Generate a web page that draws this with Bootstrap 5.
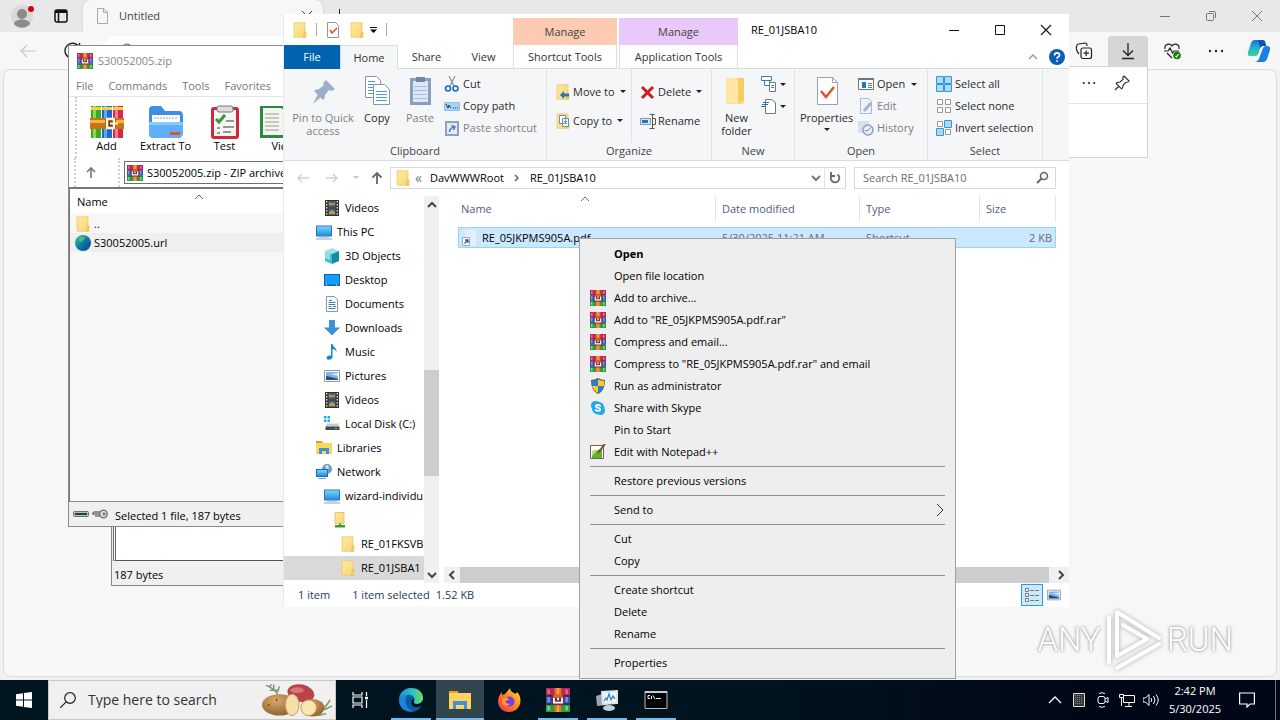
<!DOCTYPE html>
<html lang="en">
<head>
<meta charset="utf-8">
<meta name="viewport" content="width=device-width, initial-scale=1">
<title>Desktop</title>
<link rel="stylesheet" href="https://cdn.jsdelivr.net/npm/bootstrap@5.3.0/dist/css/bootstrap.min.css">
<style>
  body { font-family: "Open Sans", "Noto Sans", sans-serif; font-size: 11px; line-height: 16px; color: #1a1a1a; }
  svg { display: block; flex: none; }
  button.plain { border: 0; background: none; padding: 0; color: inherit; font-size: inherit; line-height: inherit; }
  a.plain { color: inherit; text-decoration: none; }
  .plain:disabled { color: #7d7f85 !important; }
  .i16 { width: 16px; height: 16px; }
  .i24 { width: 24px; height: 24px; }
  .i34 { width: 34px; height: 34px; }
  .desktop { height: 100vh; min-height: 700px; overflow: hidden; }
  .win { position: absolute; overflow: hidden; white-space: nowrap; }

  /* browser */
  .browser { background: #f1f1f3; }
  .tabstrip { height: 32px; background: #e8e8e8; }
  .tab-lead { width: 83px; }
  .tab-active { height: 32px; width: 240px; background: #f7f7f7; border-radius: 8px 8px 0 0; padding: 0 8px 0 12px; color: #444; box-shadow: 0 0 2px #bbb; }
  .edgebar { height: 37px; background: #f7f7f7; }
  .omnibox { height: 30px; border-radius: 15px 0 0 15px; background: #fff; margin-left: 20px; padding-left: 18px; }
  .tool { width: 44px; height: 30px; display: flex; align-items: center; justify-content: center; }
  .tool.on { width: 40px; margin: 0 2px; background: #d6d6d6; border-radius: 4px 4px 0 0; }
  .tool:last-child { width: 42px; }
  .pagearea { margin: 0 3px 3px; background: #f7f7f7; border: 1px solid #dcdce0; border-radius: 8px; }
  .flyout { right: 132px; top: 66px; width: 380px; height: 92px; background: #fff; border: 1px solid #d4d4d4; }
  .flyout-head { height: 37px; border-bottom: 1px solid #e2e2e2; gap: 18px; padding: 0 17px 4px 0; }
  .cap { width: 46px; height: 31px; display: flex; align-items: center; justify-content: center; }

  /* archive windows */
  .backwin { left: 111px; top: 300px; width: 400px; height: 286px; background: #f0f0f0; border: 1px solid #8a8a8a; }
  .backlist { margin: 0 0 0 1px; background: #fff; border-left: 3px double #666; border-bottom: 1px solid #555; }
  .backstatus { padding: 6px 0 2px 2px; color: #000; }
  .rar { left: 68px; top: 45px; width: 420px; height: 482px; background: #fff; border: 1px solid #8a8a8a; }
  .rar-title { height: 30px; padding-left: 8px; color: #888; gap: 5px; }
  .rar-menu { height: 20px; padding-left: 7px; gap: 15px; color: #777; }
  .rar-tools { height: 62px; border-top: 1px solid #e4e4e4; padding-left: 6px; color: #000; }
  .rar-tools .plain, .rar-path .plain { line-height: 13px; }
  .grip { border-left: 2px dotted #cfcfcf; align-self: stretch; }
  .rar-btn { width: 59px; }
  .rar-path { height: 29px; padding-left: 5px; }
  .rar-up { width: 42px; padding-left: 7px !important; }
  .rar-box { border: 1px solid #707070; height: 23px; padding-left: 2px; gap: 4px; color: #000; }
  .rar-list { border-top: 2px solid #777; border-left: 1px solid #777; border-bottom: 1px solid #8a8a8a; background: #f7f7f7; color: #000; }
  .rar-col { height: 25px; background: #fff; padding: 5px 0 0 7px; gap: 86px; }
  .rar-row { height: 19px; padding-left: 5px; gap: 3px; }
  .rar-row.picked { background: #efefef; }
  .rar-status { height: 24px; background: #f0f0f0; padding-left: 4px; color: #000; gap: 3px; }
  .rar-status span { padding: 3px 0 0 4px; }

  /* explorer */
  .explorer { left: 283px; right: 211px; top: 14px; bottom: 113px; background: #fff; border-left: 1px solid #e9e9e9; }
  .ex-title { height: 31px; color: #000; }
  .ex-name { padding-left: 13px; }
  .quick { width: 229px; padding-left: 8px; }
  .vline { width: 1px; height: 13px; background: #aaa; }
  .ctx { padding-top: 4px; color: #444; }
  .ctx span { display: flex; height: 27px; align-items: center; justify-content: center; }
  .c1 { width: 104px; margin-right: 2px; } .c2 { width: 119px; }
  .peach { background: #fccbb1; } .lilac { background: #e8c9fa; }
  .ex-tabs { height: 24px; border-bottom: 1px solid #dadbdc; }
  .ex-tabs .tabbtn { height: 24px; color: #333; }
  .file { width: 56px; background: #0063b1 !important; color: #fff !important; }
  .home { width: 58px; background: #f5f6f7 !important; border: 1px solid #dadbdc !important; border-bottom: 0 !important; }
  .wide { width: 57px; }
  .ctxtab { border-left: 1px solid #e0dede !important; border-right: 1px solid #e0dede !important; }
  .tabgap { width: 1px; }
  .ribbon { height: 92px; background: #f5f6f7; border-bottom: 1px solid #dadbdc; color: #2b2b2b; }
  .rgroup { display: flex; flex-direction: column; flex: none; border-right: 1px solid #e2e3e4; }
  .rgroup .glabel { height: 17px; text-align: center; color: #444; }
  .g-clip { width: 263px; } .g-org { width: 165px; } .g-new { width: 83px; } .g-open { width: 133px; } .g-sel { width: 115px; }
  .w70 { width: 70px; } .w38 { width: 38px; } .w48 { width: 48px; } .w41 { width: 41px; } .w63 { width: 63px; } .w77 { width: 77px; }
  .big { display: flex; flex-direction: column; align-items: center; padding-top: 5px !important; line-height: 13px !important; text-align: center; }
  .big svg { margin-bottom: 3px; }
  .smalls { padding-top: 4px; }
  .smalls .plain { display: flex; align-items: center; height: 22px; gap: 3px; }
  .mids { padding-top: 8px; }
  .mids .plain { display: flex; align-items: center; height: 29px; gap: 2px; }
  .caret { width: 0; height: 0; border: 3px solid transparent; border-top-color: #222; border-bottom: 0; margin-left: 3px; }
  .addr-row { height: 35px; padding: 0 13px 2px 0; color: #000; }
  .navs { width: 106px; padding-left: 11px; gap: 13px; }
  .navs .caret { margin: 0; }
  .navs svg:last-child { margin-left: -3px; }
  .abox { height: 22px; border: 1px solid #d9d9d9; }
  .crumb { font-size: 14px; margin-right: 8px; }
  .reload { width: 21px; }
  .searchbox { width: 202px; margin-left: 8px; }
  .searchbox input { border: 0; outline: 0; background: none; padding: 0 0 0 8px; min-width: 0; }
  .searchbox input::placeholder { color: #6d6d6d; opacity: 1; }
  .tree { width: 140px; flex: none; color: #000; overflow: hidden; }
  .tree a { display: flex; align-items: center; height: 24px; gap: 5px; }
  .l0 { padding-left: 32px; } .l1 { padding-left: 40px; } .l2 { padding-left: 48px; } .l3 { padding-left: 56px; }
  .tree .sel { background: #d9d9d9; }
  .vbar { width: 15px; margin-right: 1px; flex: none; background: #f0f0f0; }
  .vthumb { height: 106px; background: #cdcdcd; }
  .above { flex: 158; } .below { flex: 91; }
  .pane { min-width: 0; }
  .hbar { height: 16px; background: #f0f0f0; margin-left: 4px; }
  .hthumb { background: #cdcdcd; }
  .files { margin: 0 13px 0 18px; }
  .sortmark { left: 122px; top: 0; }
  .files table { width: 100%; table-layout: fixed; border-collapse: separate; border-spacing: 0; }
  .col-date { width: 144px; } .col-type { width: 120px; } .col-size { width: 76px; }
  .files th { font-weight: 400; color: #4c607a; height: 26px; border-right: 1px solid #e5e5e5; padding: 0 0 0 6px; }
  .files th:first-child { padding-left: 3px; }
  .files td { height: 21px; background: #cce8ff; border: 1px solid #99d1ff; border-width: 1px 0; padding: 0 3px 0 6px; color: #6d6d6d; overflow: hidden; }
  .files td:first-child { border-left-width: 1px; color: #000; padding-left: 3px; }
  .files td:last-child { border-right-width: 1px; text-align: right; }
  .files .spacer td { height: 5px; border: 0; background: none; padding: 0; }
  .ex-status { height: 24px; padding-left: 14px; color: #1e395b; }
  .picked-count { margin: 0 6px 0 22px; }
  .viewbtn { width: 22px; height: 22px; display: flex; align-items: center; justify-content: center; }
  .viewbtn.on { background: #cce8ff !important; border: 1px solid #26a0da !important; }

  /* context menu */
  .popmenu { position: absolute; left: 579px; top: 238px; width: 377px; background: #eee; border: 1px solid #a0a0a0; padding: 4px 10px; color: #000; }
  .popmenu a { display: flex; align-items: center; height: 22px; gap: 8px; }
  .popmenu hr { margin: 3px 0; border: 0; height: 1px; background: #919191; opacity: 1; }
  .ico { width: 16px; height: 16px; flex: none; }

  /* watermark */
  .wm { position: absolute; right: 47px; bottom: 48px; color: #fff; font: 300 33px/40px Roboto, sans-serif; text-shadow: 0 0 3px #999, 0 0 3px #bbb; gap: 6px; }
  .wm svg { filter: drop-shadow(0 0 2px #aaa); }

  /* taskbar */
  .taskbar { height: 40px; background: linear-gradient(90deg, #00161f, #00131f 60%, #010716 85%); color: #fff; position: relative; }
  .tb { width: 48px; height: 40px; display: flex; align-items: center; justify-content: center; }
  .apps { gap: 1px; margin-left: 3px; }
  button.run { background: linear-gradient(#76b9ed, #76b9ed) bottom / 40px 2px no-repeat; }
  button.cur { background: linear-gradient(#76b9ed, #76b9ed) bottom / 48px 2px no-repeat #30454e; }
  .tsearch { width: 288px; background: #f0f0f0; border: 1px solid #c9c9c9; padding-left: 11px; gap: 12px; }
  .tsearch input { border: 0; outline: 0; background: none; padding: 0; font-size: 14px; width: 162px; }
  .tsearch input::placeholder { color: #333; opacity: 1; }
  .tray { width: 24px; height: 40px; display: flex; align-items: center; justify-content: center; }
  .clock { width: 56px; line-height: 18px !important; }
  .peek { width: 5px; }
</style>
</head>
<body>
<svg width="0" height="0" class="position-absolute">
  <defs>
    <linearGradient id="gGlobe" x1="0" y1="0" x2="1" y2="1"><stop offset="0" stop-color="#3cc8b4"/><stop offset=".5" stop-color="#0b7aa8"/><stop offset="1" stop-color="#0a3f7f"/></linearGradient>
    <linearGradient id="gFold" x1="0" y1="0" x2="1" y2="1"><stop offset="0" stop-color="#ffe9a2"/><stop offset="1" stop-color="#f9d872"/></linearGradient>
    <linearGradient id="gBlue" x1="0" y1="0" x2="0" y2="1"><stop offset="0" stop-color="#7cd0fb"/><stop offset="1" stop-color="#1e8fdf"/></linearGradient>
    <linearGradient id="gEdge" x1="0" y1="0" x2="1" y2="0"><stop offset="0" stop-color="#1790dc"/><stop offset=".55" stop-color="#2cc0c8"/><stop offset="1" stop-color="#6fdc5a"/></linearGradient>
    <linearGradient id="gFox" x1="1" y1="0" x2="0" y2="1"><stop offset="0" stop-color="#ffe14a"/><stop offset=".45" stop-color="#ff8a1e"/><stop offset="1" stop-color="#f0205a"/></linearGradient>
    <linearGradient id="gCop" x1="0" y1="0" x2="0" y2="1"><stop offset="0" stop-color="#1a6fe0"/><stop offset=".5" stop-color="#22b2d0"/><stop offset="1" stop-color="#45cf8a"/></linearGradient>
    <radialGradient id="gPot" cx=".4" cy=".3" r=".8"><stop offset="0" stop-color="#d6a96a"/><stop offset="1" stop-color="#8a5a28"/></radialGradient>
    <symbol id="rar" viewBox="0 0 16 16">
      <path fill="#c2245c" d="M0 0h16v5H0z"/><path fill="#3450b4" d="M0 5.500h16v5H0z"/><path fill="#2d9a48" d="M0 11h16v5H0z"/>
      <path fill="#e8708e" d="M1 1h1.500v3H1zM13 1h1.500v3H13z"/><path fill="#7f96e8" d="M1 6h1.500v3.500H1zM13 6h1.500v3.500H13z"/><path fill="#7bdc7f" d="M1 12h1.500v3H1zM13 12h1.500v3H13z"/>
      <path fill="#333" d="M0 4.800h16v.8H0zM0 10.400h16v.8H0z"/><path fill="#e8761e" d="M5.800 0h4.400v16H5.800z"/><path fill="#f7a548" d="M7.300 0h1.400v16H7.300z"/>
      <path fill="#6b3048" d="M3.800 4.500h8.400v7H3.800z"/><path fill="#e0601e" d="M5 4.500h6v2H5z"/><path fill="none" stroke="#fff" stroke-width="1.200" d="M5.300 6.500v3.300h5.400V6.500M8 6.500v1.700"/>
    </symbol>
    <symbol id="folder" viewBox="0 0 16 16"><path fill="url(#gFold)" stroke="#e9c869" stroke-width=".8" d="M2 .8h11v14.400H2z"/><path fill="#f7d469" stroke="#dcb548" stroke-width=".6" d="M12.500 10h1.500v5.200h-2.500z"/></symbol>
    <symbol id="film" viewBox="0 0 16 16"><path fill="#333" d="M1 0h14v16H1z"/><path fill="#48617c" d="M4.500 1h7v6.500h-7zM4.500 8.500h7V15h-7z"/><path fill="#c69c3c" d="M5 2l4 2 2-2v3H5zM5 12l3-2 3 2v2H5z"/><path stroke="#ddd" stroke-width="1.400" stroke-dasharray="1.500 1.500" d="M2.700 1v15M13.300 1v15"/></symbol>
    <symbol id="pc" viewBox="0 0 16 16"><path fill="#2b7fb8" d="M0 1.500h16v11H0z"/><path fill="url(#gBlue)" d="M1 2.500h14v9H1z"/><path fill="#8aa4b8" d="M3 12.500h10v1H3zM0 14.500h16v1H0z"/></symbol>
    <symbol id="cube" viewBox="0 0 16 16"><path fill="#9be3ec" d="M1 3l7-3 7 3-7 3z"/><path fill="#3bbfd0" d="M1 3l7 3v10l-7-3z"/><path fill="#168ba0" d="M15 3L8 6v10l7-3z"/><path fill="#e6fbfd" d="M1 3l5 2v7l-5-2z" opacity=".5"/></symbol>
    <symbol id="desk" viewBox="0 0 16 16"><path fill="#0a67b8" d="M0 2h16v12H0z"/><path fill="#179cf5" d="M1 3h14v9.500H1z"/><path fill="#fff" d="M2 12.500h1v1H2zM12 12.500h1v1h-1z"/></symbol>
    <symbol id="docu" viewBox="0 0 16 16"><path fill="#fff" stroke="#8b98a5" d="M2.500.5h8l3 3v12h-11z"/><path stroke="#3b84b8" d="M5 4.500h3M4.500 6.500h7M4.500 8.500h7M4.500 10.500h3M9 10.500h3M4.500 12.500h7"/></symbol>
    <symbol id="down" viewBox="0 0 16 16"><path fill="#3f8ed8" d="M5 0h6v7.500h5L8 15.500 0 7.500h5z"/></symbol>
    <symbol id="music" viewBox="0 0 16 16"><path fill="#1b82d2" d="M7 0h1.500c.5 3 4.500 4 4 8-.8-2-2-2.800-4-3v8c0 3-6 4-6 1 0-2 3-3 4.500-2z"/></symbol>
    <symbol id="pic" viewBox="0 0 16 16"><path fill="#fff" stroke="#8c9aa6" d="M.5 2.500h15v11H.5z"/><path fill="#7db4ea" d="M2 4h12v8H2z"/><path fill="#284f76" d="M2 8l5 1 7 2v1H2z"/><path fill="#dcebfa" d="M6 6l8-1v3z"/></symbol>
    <symbol id="disk" viewBox="0 0 16 16"><path fill="#1cb0e8" d="M0 0h2.500v2.500H0zM3.500 0H6v2.500H3.500zM0 3.500h2.500V6H0zM3.500 3.500H6V6H3.500z"/><path fill="#c9cdd1" d="M3 7.500h11l1.500 3H1.500z"/><path fill="#45494d" d="M1.500 10.500h14V14h-14z"/><path fill="#4ade60" d="M11 12h2v1h-2z"/></symbol>
    <symbol id="libs" viewBox="0 0 16 16"><path fill="#dba52c" d="M0 1h6l1 2H0z"/><path fill="#ffd55a" d="M0 3h16v11H0z"/><path fill="#3d93d6" d="M3 14V8h10v6h-3v-3H6v3z"/></symbol>
    <symbol id="net" viewBox="0 0 16 16"><circle cx="11" cy="5" r="5" fill="#6a9cc4"/><path fill="#cfe3f2" d="M9 2l3-1 1 3-2 2z"/><path fill="#176cad" d="M0 5h12v8H0z"/><path fill="url(#gBlue)" d="M1 6h10v6H1z"/><path fill="#7fa9c8" d="M2 14h8v1H2z"/></symbol>
    <symbol id="netf" viewBox="0 0 16 16"><path fill="url(#gFold)" stroke="#e3bd55" stroke-width=".8" d="M3 .5h9v11H3z"/><path fill="#3d9c42" d="M7 11.500h2V13h4v2.500H3V13h4z"/></symbol>
    <symbol id="dots" viewBox="0 0 16 16"><circle cx="2" cy="8" r="1.200"/><circle cx="8" cy="8" r="1.200"/><circle cx="14" cy="8" r="1.200"/></symbol>
    <symbol id="books" viewBox="0 0 34 34"><path fill="#3da828" d="M1 1h10v32H1z"/><path fill="#2467c8" d="M12 1h10v32H12z"/><path fill="#d8264a" d="M23 1h10v32H23z"/><path fill="#8fd850" d="M3 1h3v32H3z"/><path fill="#5aaaf2" d="M14 1h3v32h-3z"/><path fill="#f97c90" d="M25 1h3v32h-3z"/><path fill="#f2d14c" d="M1 2h10v3H1zM12 2h10v3H12zM23 2h10v3H23z"/><path fill="#c8741a" d="M0 13h34v11H0z"/><path fill="#f7b544" d="M0 15h34v3H0z"/><path fill="#7a4012" d="M15 13h11v11H15z"/><path fill="none" stroke="#fff4d4" stroke-width="2.500" d="M17 14h7v9h-7z"/><path stroke="#fff4d4" stroke-width="2" d="M20 18.500h8"/></symbol>
  </defs>
</svg>

<div class="desktop position-relative d-flex flex-column">
  <main class="browser flex-grow-1 d-flex flex-column">
    <div class="tabstrip d-flex">
      <div class="tab-lead d-flex align-items-center ps-2">
        <svg width="30" height="30" viewBox="0 0 30 30"><circle cx="14" cy="15" r="11" fill="#d9d9d9"/><circle cx="14" cy="13" r="5" fill="#8d8a88"/><path fill="#8d8a88" d="M6 23c0-6 16-6 16 0-4 5-12 5-16 0z"/><circle cx="23" cy="8" r="3" fill="#d8000c"/></svg>
        <svg class="ms-3" width="14" height="14" viewBox="0 0 14 14" fill="none" stroke="#111" stroke-width="1.500"><rect x="1" y="1" width="12" height="12" rx="2"/><path stroke-width="3" d="M1 2.500h12"/><path d="M4.500 4v9"/></svg>
      </div>
      <div class="tab-active d-flex align-items-center"><svg class="i16" viewBox="0 0 16 16" fill="none" stroke="#aaa"><path d="M2.500.5h6l4 4v11h-10zM8.500.5v4h4"/></svg><span class="ms-2">Untitled</span>
        <button class="plain ms-auto" aria-label="Close tab"><svg class="i16" viewBox="0 0 16 16"><path stroke="#444" d="M3 3l10 10M13 3L3 13"/></svg></button></div>
      <button class="plain ms-2" aria-label="New tab"><svg class="i16" viewBox="0 0 16 16"><path stroke="#222" d="M8.500 1v14M1 8.500h14"/></svg></button>
      <div class="ms-auto d-flex">
        <button class="plain cap" aria-label="Minimize"><svg class="i16" viewBox="0 0 16 16"><path stroke="#777" d="M3 8.500h10"/></svg></button>
        <button class="plain cap" aria-label="Restore"><svg class="i16" viewBox="0 0 16 16" fill="none" stroke="#777"><rect x="3.500" y="5.500" width="7" height="7" rx="1"/><path d="M6 3.500h5q1.500 0 1.500 1.500v5"/></svg></button>
        <button class="plain cap" aria-label="Close"><svg class="i16" viewBox="0 0 16 16"><path stroke="#777" d="M3 3l10 10M13 3L3 13"/></svg></button>
      </div>
    </div>
    <div class="edgebar d-flex align-items-center">
      <button class="plain ms-3" aria-label="Back"><svg class="i24" viewBox="0 0 24 24" fill="none" stroke="#c8c8c8" stroke-width="1.200"><path d="M20 12H5M11 6l-6 6 6 6"/></svg></button>
      <button class="plain ms-4" aria-label="Refresh"><svg width="18" height="18" viewBox="0 0 18 18" fill="none" stroke="#222" stroke-width="1.400"><path d="M15 5a7.500 7.500 0 1 0 1 4M15.500 1v4h-4"/></svg></button>
      <div class="omnibox flex-grow-1 d-flex align-items-center"><svg class="i16" viewBox="0 0 16 16" fill="none" stroke="#666"><circle cx="7" cy="7" r="6"/></svg></div>
      <button class="plain tool" aria-label="Collections"><svg width="18" height="18" viewBox="0 0 18 18" fill="none" stroke="#222" stroke-width="1.200"><rect x="6" y="6" width="10.500" height="10.500" rx="2"/><path d="M11.200 8.500v5.500M8.500 11.200H14M4 12C1 9 1 5 2 3q.5-1 1.500-1L10 1q2 0 2 3"/></svg></button>
      <button class="plain tool on" aria-label="Downloads"><svg width="18" height="18" viewBox="0 0 18 18" fill="none" stroke="#222" stroke-width="1.300"><path d="M9 1v12M4 8.500l5 5 5-5M3 16.500h12"/></svg></button>
      <button class="plain tool" aria-label="Browser essentials"><svg width="18" height="18" viewBox="0 0 18 18" fill="none" stroke="#222" stroke-width="1.200"><path d="M2 7c-1-5 5-6.500 7-3 2-3.500 8-2 7 3M1 9h4l2-3 2.500 5 1.500-2h5M4 11l5 5"/><circle cx="14" cy="13.500" r="3.800" fill="#107c10" stroke="none"/><path stroke="#fff" d="M12.500 14l1 1 2-3"/></svg></button>
      <button class="plain tool" aria-label="Settings and more"><svg class="i16" fill="#222"><use href="#dots"/></svg></button>
      <button class="plain tool" aria-label="Copilot"><svg class="i24" viewBox="0 0 24 24"><path fill="url(#gCop)" d="M8 1h8l-4 12q-1 4-4 4H3Q0 17 1 13L4 4q1-3 4-3z"/><path fill="#1d7fe6" d="M12 23H8q4-1 5-6l3-8q1-2 3-2h2q3 1 2 4l-3 9q-1 3-4 3z"/><path fill="#0e52b8" d="M11 1h5q2 0 2.500 3l.8 3h-3q-2 0-3 2z"/></svg></button>
    </div>
    <div class="pagearea flex-grow-1"></div>
  </main>

  <section class="win flyout" aria-label="Downloads">
    <div class="flyout-head d-flex align-items-center justify-content-end">
      <svg width="14" height="14" fill="#222"><use href="#dots"/></svg>
      <svg class="i16" viewBox="0 0 16 16" fill="none" stroke="#333" stroke-width="1.200"><path d="M10 1l5 5-1 1-2.500.5L9 10.500 8.500 13l-1 .8-5.300-5.300.8-1L6 7l3-2.500L9 2zM5 11l-4 4"/></svg>
    </div>
  </section>

  <section class="win backwin d-flex flex-column">
    <div class="backlist flex-grow-1"></div>
    <div class="backstatus">187 bytes</div>
  </section>

  <section class="win rar d-flex flex-column">
    <div class="rar-title d-flex align-items-center"><svg class="i16"><use href="#rar"/></svg>S30052005.zip</div>
    <div class="rar-menu d-flex align-items-center"><a class="plain" href="#">File</a><a class="plain" href="#">Commands</a><a class="plain" href="#">Tools</a><a class="plain" href="#">Favorites</a></div>
    <div class="rar-tools d-flex">
      <div class="grip"></div>
      <button class="plain rar-btn d-flex flex-column align-items-center pt-1"><svg class="i34 mt-1"><use href="#books"/></svg>Add</button>
      <button class="plain rar-btn d-flex flex-column align-items-center pt-1"><svg class="i34 mt-1" viewBox="0 0 34 34"><path fill="#3e8ee8" d="M0 5q0-4 4-4h8l4 5h14q4 0 4 5v6H0z"/><path fill="#fff" d="M3 10h28v12H3z"/><path stroke="#8fa6c0" stroke-dasharray="2 1" d="M5 13h24"/><path fill="#5fb0fa" d="M0 17h34v12q-1 4-4 4H4q-4 0-4-4z"/><path fill="#8ccaff" d="M0 17h34v3H0z"/><path fill="#e8502e" d="M21 27h10v3H21z"/></svg>Extract To</button>
      <button class="plain rar-btn d-flex flex-column align-items-center pt-1"><svg class="i34 mt-1" viewBox="0 0 34 34"><rect x="3" y="2" width="28" height="32" rx="3" fill="#d3273a"/><path fill="#f6f6f2" d="M6 5h22v26H6z"/><rect x="9" y="1" width="16" height="6" rx="2" fill="#ddd" stroke="#777"/><path fill="none" stroke="#2d9a48" stroke-width="3" d="M8 14l3 3 6-7"/><path stroke="#777" stroke-width="1.500" d="M18 16h8M9 23h3M15 22h11M9 28h3M15 27h8"/></svg>Test</button>
      <button class="plain rar-btn d-flex flex-column align-items-center pt-1"><svg width="48" height="34" class="mt-1" viewBox="0 0 48 34"><path fill="#2a8a43" d="M0 1h48v32H0z"/><path fill="#f5f5f0" d="M3 3h18l3 2 3-2h18v27H3z"/><path stroke="#999" d="M5 9h14M5 13h14M5 17h14M5 21h14M5 25h14M24 6v25"/></svg>View</button>
    </div>
    <div class="rar-path d-flex align-items-center">
      <div class="grip"></div>
      <button class="plain rar-up" aria-label="Up"><svg class="i16" viewBox="0 0 16 16" fill="none" stroke="#777" stroke-width="1.600"><path d="M8 13V3M4 7l4-4 4 4"/></svg></button>
      <div class="grip me-1"></div>
      <div class="rar-box flex-grow-1 d-flex align-items-center"><svg class="i16"><use href="#rar"/></svg>S30052005.zip - ZIP archive</div>
    </div>
    <div class="rar-list flex-grow-1">
      <div class="rar-col d-flex">Name<svg width="10" height="8" viewBox="0 0 10 8" fill="none" stroke="#666"><path d="M1 5l4-4 4 4"/></svg></div>
      <div class="rar-row d-flex align-items-center"><svg class="i16"><use href="#folder"/></svg>..</div>
      <div class="rar-row picked d-flex align-items-center"><svg class="i16" viewBox="0 0 16 16"><circle cx="8" cy="8" r="8" fill="url(#gGlobe)"/><path fill="#5fc45c" d="M4 3q4-3 6 0-1 3-3 3-2 2-3 0z" opacity=".8"/></svg>S30052005.url</div>
    </div>
    <div class="rar-status d-flex align-items-center">
      <svg class="i16" viewBox="0 0 16 16"><rect x=".5" y="5.500" width="15" height="5" rx="1" fill="#b9bcbc" stroke="#6c7070"/><path fill="#1c4640" d="M2 7h12v2H2z"/></svg>
      <svg class="i16" viewBox="0 0 16 16" fill="none" stroke="#777" stroke-width="1.500"><circle cx="11.500" cy="8" r="3.700"/><circle cx="12" cy="8" r="1"/><path d="M8 6H2L0 8h8M3 10h5"/></svg>
      <span>Selected 1 file, 187 bytes</span>
    </div>
  </section>

  <section class="win explorer d-flex flex-column">
    <div class="ex-title d-flex">
      <div class="quick d-flex align-items-center">
        <svg class="i16"><use href="#folder"/></svg><div class="vline ms-2 me-2"></div>
        <svg class="i16" viewBox="0 0 16 16"><path fill="#fff" stroke="#8e98a2" d="M2.500.5h8l3 3v12h-11z"/><path fill="none" stroke="#e0532c" stroke-width="1.600" d="M5 8l2 3 5-5"/></svg>
        <svg class="i16 ms-2"><use href="#folder"/></svg>
        <svg class="ms-1" width="9" height="9" viewBox="0 0 9 9"><path stroke="#111" d="M1 2.500h7"/><path d="M1 4.500h7L4.500 8z"/></svg><div class="vline ms-2"></div>
      </div>
      <div class="ctx c1"><span class="peach">Manage</span></div>
      <div class="ctx c2"><span class="lilac">Manage</span></div>
      <div class="ex-name align-self-center">RE_01JSBA10</div>
      <div class="ms-auto d-flex">
        <button class="plain cap" aria-label="Minimize"><svg class="i16" viewBox="0 0 16 16"><path stroke="#111" d="M3 8.500h10"/></svg></button>
        <button class="plain cap" aria-label="Maximize"><svg class="i16" viewBox="0 0 16 16"><path fill="none" stroke="#111" d="M3.500 3.500h9v9h-9z"/></svg></button>
        <button class="plain cap" aria-label="Close"><svg class="i16" viewBox="0 0 16 16"><path stroke="#111" stroke-width="1.100" d="M3 3l10 10M13 3L3 13"/></svg></button>
      </div>
    </div>
    <div class="ex-tabs d-flex">
      <button class="plain tabbtn file">File</button><button class="plain tabbtn home">Home</button><button class="plain tabbtn wide">Share</button><button class="plain tabbtn wide">View</button>
      <div class="tabgap"></div>
      <button class="plain tabbtn ctxtab c1">Shortcut Tools</button><button class="plain tabbtn ctxtab c2">Application Tools</button>
      <div class="ms-auto d-flex align-items-center gap-2 pe-1">
        <svg class="i16" viewBox="0 0 16 16" fill="none" stroke="#999" stroke-width="1.300"><path d="M4 10l4-4 4 4"/></svg>
        <svg class="i16" viewBox="0 0 16 16"><circle cx="8" cy="8" r="8" fill="#0a5eb8"/><path fill="none" stroke="#fff" stroke-width="1.700" d="M5.500 6.500q0-2.700 2.500-2.700t2.500 2.200q0 1.400-1.500 2-1 .5-1 1.700M8 11.200v1.600"/></svg>
      </div>
    </div>
    <div class="ribbon d-flex">
      <div class="rgroup g-clip">
        <div class="d-flex flex-grow-1 ps-1">
          <button class="plain big w70" disabled><svg class="i34" viewBox="0 0 34 34"><path fill="#9db0c8" d="M20 6l9 9-3 2-3-1-4 5q0 4-2 5l-9-9q2-2 5-2l5-4-1-2zM12 20l3 3-8 7z"/></svg>Pin to Quick<br>access</button>
          <button class="plain big w38"><svg class="i34" viewBox="0 0 34 34" fill="#fff" stroke="#8796a6"><path d="M5.500 2.500h11l4 4v17h-15z"/><path d="M13.500 10.500h11l5 5v15h-16z"/><path stroke="#4a9bdc" d="M8 7.500h7M8 10.500h5M8 13.500h5M8 16.500h5M8 19.500h5M16 17.500h11M16 20.500h11M16 23.500h11M16 26.500h11"/></svg>Copy</button>
          <button class="plain big w48" disabled><svg class="i34" viewBox="0 0 34 34"><path fill="#8a9fbf" d="M7 4h21v27H7z"/><path fill="#dce6f4" d="M10 7h15v21H10z"/><path fill="#6f86a8" d="M13 3h9v5h-9z"/><path stroke="#a9bcd8" d="M11 12.500h13M11 16.500h13M11 20.500h13M11 24.500h13"/></svg>Paste</button>
          <div class="smalls">
            <button class="plain"><svg class="i16" viewBox="0 0 16 16" fill="none"><path stroke="#8a97a4" stroke-width="1.300" d="M5 0l5 10M11 0L6 10"/><circle cx="4" cy="12.500" r="2.500" stroke="#1d6fb8" stroke-width="1.600"/><circle cx="11.500" cy="12.500" r="2.500" stroke="#1d6fb8" stroke-width="1.600"/></svg>Cut</button>
            <button class="plain"><svg class="i16" viewBox="0 0 16 16"><path fill="#a9d2f5" stroke="#8fc0e8" d="M.5 4.500h15v8H.5z"/><path fill="none" stroke="#123e6b" d="M2 6l2 4 1-3 2 3M9 10h1M11 10h1M13 10h1"/></svg>Copy path</button>
            <button class="plain" disabled><svg class="i16" viewBox="0 0 16 16"><path fill="#e4ebf5" stroke="#8ea3c3" stroke-width="2" d="M2 2h12v13H2z"/><path fill="none" stroke="#587fb4" stroke-width="1.600" d="M5.500 12q0-4 5-5M7.500 5.500L11 7 9.500 10"/></svg>Paste shortcut</button>
          </div>
        </div>
        <div class="glabel">Clipboard</div>
      </div>
      <div class="rgroup g-org">
        <div class="d-flex flex-grow-1 ps-2">
          <div class="mids border-end w77">
            <button class="plain"><svg class="i16" viewBox="0 0 16 16"><use href="#folder"/><path fill="#2a73b5" d="M5 11l4-4v2.500h5v3H9V15z"/></svg>Move to<span class="caret"></span></button>
            <button class="plain"><svg class="i16" viewBox="0 0 16 16"><use href="#folder"/><path fill="#fff" stroke="#6b8fb5" d="M4.500 2.500h6v8h-6zM7.500 5.500h6v8h-6z"/><path stroke="#6b8fb5" d="M9 8.500h3M9 10.500h3"/></svg>Copy to<span class="caret"></span></button>
          </div>
          <div class="mids ps-1">
            <button class="plain ps-1"><svg class="i16" viewBox="0 0 16 16"><path stroke="#d11a1a" stroke-width="3" d="M2 3l11 11M13 3L2 14"/></svg>Delete<span class="caret"></span></button>
            <button class="plain ps-1"><svg class="i16" viewBox="0 0 16 16"><path fill="#d5e9fb" stroke="#8a97a4" d="M.5 5.500h10v6H.5z"/><path fill="#1d7ac8" d="M2 7h6v3H2z"/><path fill="none" stroke="#555" d="M9.500 1.500h5M9.500 15.500h5M12.500 1.500v14M13 5.500h2.500v6H13"/></svg>Rename</button>
          </div>
        </div>
        <div class="glabel">Organize</div>
      </div>
      <div class="rgroup g-new">
        <div class="d-flex flex-grow-1 ps-1">
          <button class="plain big w41"><svg class="i34" viewBox="0 0 34 34"><path fill="#fbdf8c" d="M6 4h18v26H6z"/><path fill="#f5cd62" d="M18 4h6v22l-6 4z"/><path fill="#ffe8a6" d="M6 4h7l5 4v22L6 28z"/></svg>New<br>folder</button>
          <div class="smalls ps-1">
            <button class="plain" aria-label="New item"><svg class="i16" viewBox="0 0 16 16" fill="#fff" stroke="#3a7cab"><path d="M.5.500h10v4H.5zM3.500 4.500h5v5h-5z"/><path stroke="#777" d="M8.500 6.500h6v9h-6zM10 9.500h3M10 11.500h3"/></svg><span class="caret ms-0"></span></button>
            <button class="plain" aria-label="Easy access"><svg class="i16" viewBox="0 0 16 16" fill="none" stroke="#777"><path fill="#fff" d="M4.500 1.500h6l4 3v11h-10z"/><path stroke="#2a73b5" d="M2 4.500h6M1 6.500h6M0 8.500h5"/></svg><span class="caret ms-0"></span></button>
          </div>
        </div>
        <div class="glabel">New</div>
      </div>
      <div class="rgroup g-open">
        <div class="d-flex flex-grow-1">
          <button class="plain big w63"><svg class="i34" viewBox="0 0 34 34"><path fill="#fff" stroke="#9aa3ad" d="M7.500 3.500h15l5 5v22h-20z"/><path fill="none" stroke="#9aa3ad" d="M22.500 3.500v5h5"/><path fill="none" stroke="#e0532c" stroke-width="2.500" d="M11 17l5 6 8-10"/></svg>Properties<span class="caret mt-1 ms-0"></span></button>
          <div class="smalls">
            <button class="plain"><svg class="i16" viewBox="0 0 16 16"><path fill="#fff" stroke="#6b7783" d="M.5 2.500h15v11H.5z"/><path fill="#6b7783" d="M0 2h16v2H0z"/><path fill="#1d7ac8" d="M4 6h4v6H4z"/><path stroke="#6b7783" d="M10 7.500h4M10 9.500h4M10 11.500h4"/></svg>Open<span class="caret"></span></button>
            <button class="plain" disabled><svg class="i16" viewBox="0 0 16 16"><path fill="#eef2fa" stroke="#a9b9d6" d="M2.500.5h8l3 3v12h-11z"/><path stroke="#a3b4d3" stroke-width="3" d="M13 5l-7 8"/></svg>Edit</button>
            <button class="plain" disabled><svg class="i16" viewBox="0 0 16 16"><path fill="#d8e0ee" d="M0 1h11v12H0z"/><circle cx="10" cy="10" r="5" fill="#e9eef7" stroke="#8ea3c3" stroke-width="1.600"/><path fill="none" stroke="#6d87b0" d="M12.500 7.500L10 10.500H7"/></svg>History</button>
          </div>
        </div>
        <div class="glabel">Open</div>
      </div>
      <div class="rgroup g-sel">
        <div class="smalls flex-grow-1 ps-1">
          <button class="plain ps-1"><svg class="i16" viewBox="0 0 16 16" fill="#a9dcfb" stroke="#3a96d0"><path d="M.5.5h7v7h-7zM8.500.5h7v7h-7zM.5 8.500h7v7h-7zM8.500 8.500h7v7h-7z"/></svg>Select all</button>
          <button class="plain ps-1"><svg class="i16" viewBox="0 0 16 16" fill="#fff" stroke="#999"><path d="M1.500 1.500h5v5h-5zM9.500 1.500h5v5h-5zM1.500 9.500h5v5h-5zM9.500 9.500h5v5h-5z"/></svg>Select none</button>
          <button class="plain ps-1"><svg class="i16" viewBox="0 0 16 16" fill="#fff" stroke="#999"><path d="M1.500 1.500h5v5h-5zM9.500 9.500h5v5h-5z"/><path fill="#a9dcfb" stroke="#3a96d0" d="M8.500.5h7v7h-7zM.5 8.500h7v7h-7z"/></svg>Invert selection</button>
        </div>
        <div class="glabel">Select</div>
      </div>
    </div>
    <div class="addr-row d-flex align-items-center">
      <div class="navs d-flex align-items-center">
        <svg class="i16" viewBox="0 0 16 16" fill="none" stroke="#cfcfcf" stroke-width="1.400"><path d="M14 8H3M7 4L3 8l4 4"/></svg>
        <svg class="i16" viewBox="0 0 16 16" fill="none" stroke="#cfcfcf" stroke-width="1.400"><path d="M2 8h11M9 4l4 4-4 4"/></svg>
        <span class="caret opacity-25"></span>
        <svg class="i16" viewBox="0 0 16 16" fill="none" stroke="#666" stroke-width="1.800"><path d="M8 14V3M3.500 7.500L8 3l4.500 4.500"/></svg>
      </div>
      <div class="abox flex-grow-1 d-flex align-items-center">
        <svg class="i16 ms-1 me-1"><use href="#folder"/></svg><span class="crumb text-secondary">«</span>DavWWWRoot
        <svg class="mx-1" width="18" height="10" viewBox="0 0 18 10" fill="none" stroke="#555" stroke-width="1.300"><path d="M7 2l3 3-3 3"/></svg>RE_01JSBA10
        <svg class="i16 ms-auto" viewBox="0 0 16 16" fill="none" stroke="#777" stroke-width="2"><path d="M4 6l4 4 4-4"/></svg>
        <div class="reload border-start d-flex align-items-center justify-content-center align-self-stretch"><svg width="12" height="12" viewBox="0 0 12 12" fill="none" stroke="#666" stroke-width="1.800"><path d="M8.500 2.500A4.300 4.300 0 1 1 3 3M2 0v4h4"/></svg></div>
      </div>
      <label class="abox searchbox d-flex align-items-center"><input class="flex-grow-1" type="text" placeholder="Search RE_01JSBA10" aria-label="Search RE_01JSBA10"><svg class="i16 me-1" viewBox="0 0 16 16" fill="none" stroke="#666" stroke-width="1.600"><circle cx="9" cy="6" r="3.500"/><path stroke-width="2" d="M6.500 8.500L2 13"/></svg></label>
    </div>
    <div class="flex-grow-1 d-flex overflow-hidden">
      <nav class="tree">
        <a class="plain l1" href="#"><svg class="i16"><use href="#film"/></svg>Videos</a>
        <a class="plain l0" href="#"><svg class="i16"><use href="#pc"/></svg>This PC</a>
        <a class="plain l1" href="#"><svg class="i16"><use href="#cube"/></svg>3D Objects</a>
        <a class="plain l1" href="#"><svg class="i16"><use href="#desk"/></svg>Desktop</a>
        <a class="plain l1" href="#"><svg class="i16"><use href="#docu"/></svg>Documents</a>
        <a class="plain l1" href="#"><svg class="i16"><use href="#down"/></svg>Downloads</a>
        <a class="plain l1" href="#"><svg class="i16"><use href="#music"/></svg>Music</a>
        <a class="plain l1" href="#"><svg class="i16"><use href="#pic"/></svg>Pictures</a>
        <a class="plain l1" href="#"><svg class="i16"><use href="#film"/></svg>Videos</a>
        <a class="plain l1" href="#"><svg class="i16"><use href="#disk"/></svg>Local Disk (C:)</a>
        <a class="plain l0" href="#"><svg class="i16"><use href="#libs"/></svg>Libraries</a>
        <a class="plain l0" href="#"><svg class="i16"><use href="#net"/></svg>Network</a>
        <a class="plain l1" href="#"><svg class="i16"><use href="#pc"/></svg>wizard-individu</a>
        <a class="plain l2" href="#" aria-label="Shared folder"><svg class="i16"><use href="#netf"/></svg></a>
        <a class="plain l3" href="#"><svg class="i16"><use href="#folder"/></svg>RE_01FKSVB</a>
        <a class="plain l3 sel" href="#"><svg class="i16"><use href="#folder"/></svg>RE_01JSBA1</a>
      </nav>
      <div class="vbar d-flex flex-column align-items-center">
        <svg class="i16" viewBox="0 0 16 16" fill="none" stroke="#444" stroke-width="2"><path d="M4 11l4-4 4 4"/></svg>
        <div class="above"></div><div class="vthumb w-100"></div><div class="below"></div>
        <svg class="i16" viewBox="0 0 16 16" fill="none" stroke="#444" stroke-width="2"><path d="M4 6l4 4 4-4"/></svg>
      </div>
      <div class="pane flex-grow-1 d-flex flex-column">
        <div class="files flex-grow-1 position-relative">
          <svg class="sortmark position-absolute" width="10" height="6" viewBox="0 0 10 6" fill="none" stroke="#666"><path d="M1 5l4-4 4 4"/></svg>
          <table>
            <colgroup><col><col class="col-date"><col class="col-type"><col class="col-size"></colgroup>
            <thead><tr><th>Name</th><th>Date modified</th><th>Type</th><th>Size</th></tr></thead>
            <tbody><tr class="spacer"><td colspan="4"></td></tr>
            <tr><td><span class="d-flex align-items-center gap-1"><svg class="i16" viewBox="0 0 16 16"><path fill="#e2f0fc" d="M3 0h8l3 3v13H3z"/><path fill="#fff" stroke="#9ab" d="M.5 7.500h7v8h-7z"/><path fill="none" stroke="#2a5d9a" stroke-width="1.300" d="M2.500 13.500l3-3M3 10h3v3"/></svg>RE_05JKPMS905A.pdf</span></td><td>5/30/2025 11:21 AM</td><td>Shortcut</td><td>2 KB</td></tr></tbody>
          </table>
        </div>
        <div class="hbar d-flex align-items-center">
          <svg class="i16" viewBox="0 0 16 16" fill="none" stroke="#444" stroke-width="2"><path d="M10 4L6 8l4 4"/></svg>
          <div class="hthumb flex-grow-1 align-self-stretch me-1"></div>
          <svg class="i16" viewBox="0 0 16 16" fill="none" stroke="#444" stroke-width="2"><path d="M6 4l4 4-4 4"/></svg>
        </div>
      </div>
    </div>
    <div class="ex-status d-flex align-items-center">
      <span>1 item</span><span class="picked-count">1 item selected</span><span>1.52 KB</span>
      <div class="ms-auto d-flex pe-1">
        <button class="plain viewbtn on" aria-label="Details"><svg class="i16" viewBox="0 0 16 16" stroke="#777"><path fill="#fff" d="M1.500 1.500h3v3h-3zM1.500 6.500h3v3h-3zM1.500 11.500h3v3h-3z"/><path d="M6 3.500h4M11 3.500h4M6 8.500h4M11 8.500h4M6 13.500h4M11 13.500h4"/></svg></button>
        <button class="plain viewbtn" aria-label="Thumbnails"><svg width="14" height="14"><use href="#pic"/></svg></button>
      </div>
    </div>
  </section>

  <div class="wm d-flex align-items-center">ANY<svg width="54" height="64" viewBox="0 0 54 64" fill="none" stroke="#fff" stroke-width="4" stroke-linejoin="round" stroke-linecap="round"><path d="M2 10v44M10 34V4l42 26M10 16v32l30-17-24-14M10 60l42-24"/></svg>RUN</div>

  <nav class="popmenu text-nowrap">
    <a class="plain fw-bold" href="#"><span class="ico"></span>Open</a>
    <a class="plain" href="#"><span class="ico"></span>Open file location</a>
    <a class="plain" href="#"><svg class="i16"><use href="#rar"/></svg>Add to archive...</a>
    <a class="plain" href="#"><svg class="i16"><use href="#rar"/></svg>Add to "RE_05JKPMS905A.pdf.rar"</a>
    <a class="plain" href="#"><svg class="i16"><use href="#rar"/></svg>Compress and email...</a>
    <a class="plain" href="#"><svg class="i16"><use href="#rar"/></svg>Compress to "RE_05JKPMS905A.pdf.rar" and email</a>
    <a class="plain" href="#"><svg class="i16" viewBox="0 0 16 16"><path fill="#555" d="M8 0q3 2 7 2 0 11-7 14Q1 13 1 2q4 0 7-2z"/><path fill="#2b7cd3" d="M8 1.200V8H2Q1.700 5 1.800 2.800 5 3 8 1.200z"/><path fill="#ffc928" d="M8 1.200V8h6q.3-3 .2-5.200Q11 3 8 1.200zM8 8v7Q3.500 13 2 8z"/><path fill="#2b7cd3" d="M8 8h6q-1.500 5-6 7z"/></svg>Run as administrator</a>
    <a class="plain" href="#"><svg class="i16" viewBox="0 0 16 16"><circle cx="5.500" cy="5.500" r="4.500" fill="#24a8ec"/><circle cx="10.500" cy="10.500" r="4.500" fill="#24a8ec"/><circle cx="8" cy="8" r="6.300" fill="#24a8ec"/><path fill="none" stroke="#fff" stroke-width="1.700" stroke-linecap="round" d="M10.300 5.800Q8 4 6 5.500q-.8 1.500 2 2.300 3 .7 2 2.500-2.200 1.400-4.400-.3"/></svg>Share with Skype</a>
    <a class="plain" href="#"><span class="ico"></span>Pin to Start</a>
    <a class="plain" href="#"><svg class="i16" viewBox="0 0 16 16"><path fill="#fff" stroke="#666" d="M.5 1.500h13v13H.5z"/><path fill="#63b32e" d="M2 7l10-2v9H2z"/><path fill="#b9e07a" d="M2 7l6-1-6 6z"/><path stroke="#8a4a1a" stroke-width="2" d="M15 0L8 9"/></svg>Edit with Notepad++</a>
    <hr>
    <a class="plain" href="#"><span class="ico"></span>Restore previous versions</a>
    <hr>
    <a class="plain" href="#"><span class="ico"></span>Send to<svg class="ms-auto" width="10" height="14" viewBox="0 0 10 14" fill="none" stroke="#333"><path d="M2 1l6 6-6 6"/></svg></a>
    <hr>
    <a class="plain" href="#"><span class="ico"></span>Cut</a>
    <a class="plain" href="#"><span class="ico"></span>Copy</a>
    <hr>
    <a class="plain" href="#"><span class="ico"></span>Create shortcut</a>
    <a class="plain" href="#"><span class="ico"></span>Delete</a>
    <a class="plain" href="#"><span class="ico"></span>Rename</a>
    <hr>
    <a class="plain" href="#"><span class="ico"></span>Properties</a>
  </nav>

  <footer class="taskbar d-flex">
    <button class="plain tb" aria-label="Start"><svg class="i16" viewBox="0 0 16 16" fill="#fff"><path d="M0 2.200L7 1.200v6.300H0zM8 1l8-1v7.500H8zM0 8.500h7v6.300l-7-1zM8 8.500h8V16l-8-1z"/></svg></button>
    <label class="tsearch d-flex align-items-center">
      <svg class="i16" viewBox="0 0 16 16" fill="none" stroke="#222" stroke-width="1.200"><circle cx="10" cy="6" r="5.300"/><path d="M6.200 9.800L0 16"/></svg>
      <input type="text" placeholder="Type here to search" aria-label="Type here to search">
      <svg width="72" height="36" viewBox="0 0 74 36"><g stroke="#7c9468" stroke-width="1.500" fill="none"><path d="M4 3q8 2 14 12M8 8h8M12 2v6M7 5l3-3M18 4l-2 6M56 32q8-4 14-14M60 22l4 6M72 24l-8 4M58 34l8-2"/></g><ellipse cx="40" cy="11" rx="14" ry="9" fill="#b8444a" transform="rotate(12 40 11)"/><ellipse cx="36" cy="8" rx="7" ry="3" fill="#d9747a"/><ellipse cx="18" cy="23" rx="18" ry="11" fill="url(#gPot)"/><circle cx="7" cy="23" r="1" fill="#6a4218"/><circle cx="15" cy="18" r="1" fill="#6a4218"/><ellipse cx="31" cy="23" rx="7" ry="11" fill="#f4dfa8" stroke="#c79a5a"/><ellipse cx="52" cy="26" rx="12" ry="9" fill="url(#gPot)"/><ellipse cx="48" cy="26" rx="8" ry="8" fill="#f7e6b0" stroke="#c79a5a"/></svg>
    </label>
    <button class="plain tb" aria-label="Task view"><svg class="i16" viewBox="0 0 16 16" fill="none" stroke="#fff" stroke-width="1.200"><path d="M1 0v3h9V0M1 5h9v6H1zM1 16v-3h9v3M14.500 0v4M14.500 8v8"/><path stroke-width="2.500" d="M13 6h3"/></svg></button>
    <div class="apps d-flex">
      <button class="plain tb run" aria-label="Edge"><svg class="i24" viewBox="0 0 24 24"><circle cx="12" cy="12" r="12" fill="#0c59a4"/><path fill="url(#gEdge)" d="M0 11C1 4 6 0 12 0c8 0 12 5 12 10 0 4-3 6-6 6-4 0-4-2-3-3 2-4-3-7-7-6-4 0-7 3-8 4z"/><path fill="#1b87d8" d="M0 12c1-4 5-6 9-5-4 3-4 13 5 16C5 25 0 18 0 12z"/><path fill="#00141e" d="M15 13q-1 3 3 3 4 0 6-4 0 4-1 6-8 3-10-1-2-3 1-6 2 0 1 2z"/></svg></button>
      <button class="plain tb cur" aria-label="File Explorer"><svg class="i24" viewBox="0 0 24 24"><path fill="#e8a420" d="M1 3h9l1 3H1z"/><path fill="#ffd35c" d="M1 5h22v16H1z"/><path fill="#3f93da" d="M5 21v-8h14v8h-3v-4H8v4z"/></svg></button>
      <button class="plain tb" aria-label="Firefox"><svg class="i24" viewBox="0 0 24 24"><path fill="url(#gFox)" d="M12 24C5 24 1 19 1 13c0-4 2-7 4-9v3l3-1 5-6c0 3 2 4 4 5 1 1 2 1 3-1 3 3 3.500 6 3.500 9C23 20 18 24 12 24z"/><circle cx="12.500" cy="13.500" r="5" fill="#7a3ce0"/><path fill="#ff9a22" d="M5 11q4-3 7 0-1 2-4 2 1 3 5 3-4 4-8 0z"/></svg></button>
      <button class="plain tb run" aria-label="WinRAR"><svg class="i24"><use href="#rar"/></svg></button>
      <button class="plain tb run" aria-label="Monitor"><svg class="i24" viewBox="0 0 24 24"><path fill="#9aa5ae" d="M1 8l12-4v13L2 18z"/><path fill="#dfe6ea" d="M6 3l17-1v14L7 17z"/><path fill="#eef7fd" d="M8 5l13-1v10L9 15z"/><path fill="none" stroke="#3a7fc0" stroke-width="1.200" d="M9 13l2-3 1 2 2-6 2 6 2-4 2 3"/><ellipse cx="14" cy="20" rx="6" ry="3" fill="#c8d0d6"/></svg></button>
      <button class="plain tb run" aria-label="Command prompt"><svg class="i24" viewBox="0 0 24 24"><path fill="#050505" stroke="#bbb" d="M1 3.500h22v17H1z"/><path fill="#ccc" d="M1 3h22v2H1z"/><path fill="none" stroke="#eee" d="M6 7.500H4v3h2M7.500 8v3M9 7.500l2 3.500M12 10.500h5"/></svg></button>
    </div>
    <div class="ms-auto d-flex">
      <button class="plain tray" aria-label="Show hidden icons"><svg class="i16" viewBox="0 0 16 16" fill="none" stroke="#fff" stroke-width="1.300"><path d="M2 11l6-6 6 6"/></svg></button>
      <div class="tray"><svg width="12" height="14" viewBox="0 0 12 14"><path fill="#333" stroke="#ddd" d="M.5.500h11v13H.5z"/><path stroke="#888" stroke-width="1" stroke-dasharray="1 1" d="M2.500 2v10M4.500 2v10M6.500 2v10M8.500 2v10"/></svg></div>
      <div class="tray"><svg class="i16" viewBox="0 0 16 16" fill="none" stroke="#fff"><rect x="3" y="4.500" width="7" height="7" rx="2"/><path d="M10 7l3-1.500v5L10 9M4 1.500q3-1.500 6 0M4 14.500q3 1.500 6 0"/></svg></div>
      <div class="tray"><svg class="i16" viewBox="0 0 16 16" fill="none" stroke="#fff"><path d="M5 3.500h10.500v7H4.500V6M.5 2.500h4v3h-4zM2.500 6v8M10 11v3M6 14.500h7"/></svg></div>
      <div class="tray me-1"><svg class="i16" viewBox="0 0 16 16" fill="none" stroke="#fff"><path d="M0 6h2.500L6 2.500v11L2.500 10H0zM8 6q1.500 2 0 4M10.500 4q3 4 0 8M13 2.500q4.500 5.500 0 11"/></svg></div>
      <button class="plain clock">2:42 PM<br>5/30/2025</button>
      <button class="plain tb me-1" aria-label="Notifications"><svg class="i16" viewBox="0 0 16 16" fill="none" stroke="#fff" stroke-width="1.200"><path d="M.6 1h14.800v11H11l-3 3v-3H.6z"/></svg></button>
      <div class="peek border-start border-secondary"></div>
    </div>
  </footer>
</div>
<script src="https://cdn.jsdelivr.net/npm/bootstrap@5.3.0/dist/js/bootstrap.bundle.min.js"></script>
</body>
</html>
